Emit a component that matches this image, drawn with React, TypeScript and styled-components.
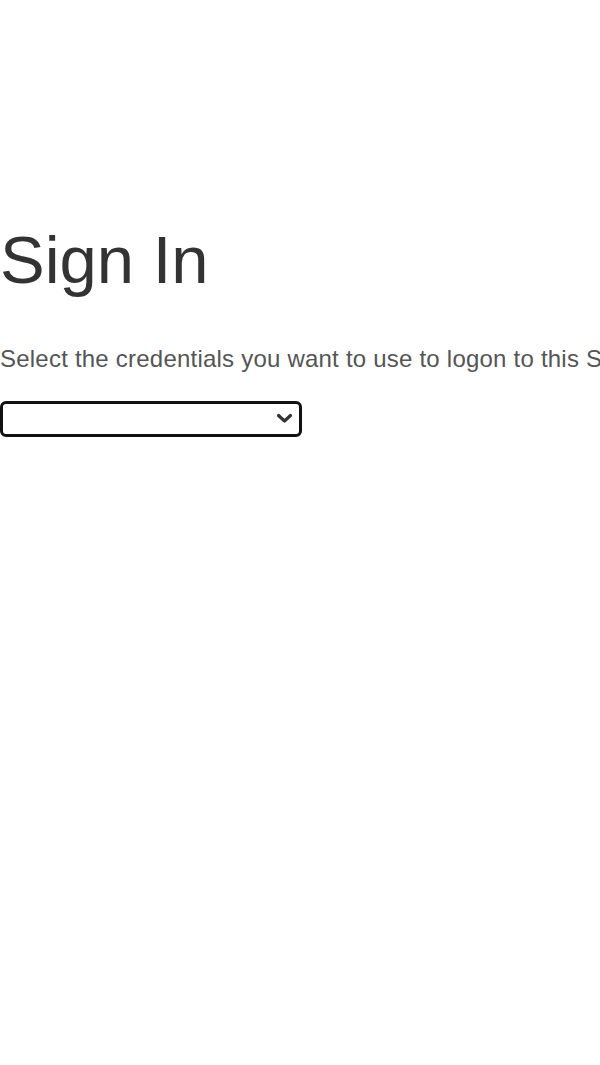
import React from 'react';
import styled, { createGlobalStyle } from 'styled-components';

const GlobalStyle = createGlobalStyle`
  html, body {
    margin: 0;
    padding: 0;
    background: #fff;
    overflow-x: hidden;
  }
  body {
    font-family: "Liberation Sans", Arial, sans-serif;
  }
`;

const Page = styled.main`
  display: flex;
  flex-direction: column;
  align-items: flex-start;
  padding-top: 221px;
`;

const Title = styled.h1`
  margin: 0 0 47px 0;
  font-size: 67px;
  line-height: 77px;
  font-weight: normal;
  color: #333;
`;

// the line runs past the right edge in the original, as here
const Intro = styled.p`
  margin: 0 0 28px 0;
  font-size: 24px;
  line-height: 28px;
  letter-spacing: 0.22px;
  color: #555;
  white-space: nowrap;
`;

const SelectWrap = styled.div`
  position: relative;
  width: 302px;
  height: 36px;
`;

const CredentialSelect = styled.select`
  box-sizing: border-box;
  width: 100%;
  height: 100%;
  margin: 0;
  padding: 0 30px 0 6px;
  border: 3px solid #111;
  border-radius: 6px;
  background: #fff;
  appearance: none;
  font-family: "Liberation Sans", Arial, sans-serif;
  font-size: 16px;
  color: #222;
`;

const Chevron = styled.svg`
  position: absolute;
  right: 9px;
  top: 12px;
  width: 17px;
  height: 11px;
  pointer-events: none;
`;

export default function App(): JSX.Element {
  return (
    <>
      <GlobalStyle />
      <Page>
        <Title>Sign In</Title>
        <Intro>Select the credentials you want to use to logon to this Site</Intro>
        <SelectWrap>
          <CredentialSelect aria-label="Credentials" defaultValue="">
            <option value="" />
          </CredentialSelect>
          <Chevron viewBox="0 0 17 11">
            <path d="M2.5 2.5 L8.5 8 L14.5 2.5" fill="none" stroke="#333" strokeWidth="3.2" strokeLinecap="round" strokeLinejoin="round" />
          </Chevron>
        </SelectWrap>
      </Page>
    </>
  );
}
